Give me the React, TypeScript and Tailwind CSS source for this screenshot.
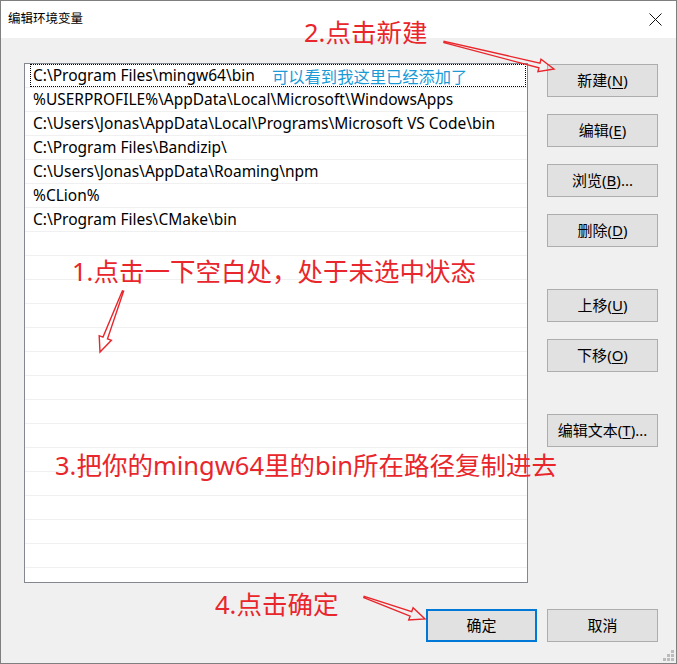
import React from 'react';

const UI_FONT = "font-['Noto_Sans','Noto_Sans_CJK_SC',sans-serif]";

const PATHS = [
  'C:\\Program Files\\mingw64\\bin',
  '%USERPROFILE%\\AppData\\Local\\Microsoft\\WindowsApps',
  'C:\\Users\\Jonas\\AppData\\Local\\Programs\\Microsoft VS Code\\bin',
  'C:\\Program Files\\Bandizip\\',
  'C:\\Users\\Jonas\\AppData\\Roaming\\npm',
  '%CLion%',
  'C:\\Program Files\\CMake\\bin',
];

const ROWS = 22;

function Btn({ label, k, tail = '', primary = false }: { label: string; k?: string; tail?: string; primary?: boolean }) {
  return (
    <button
      className={`w-[111px] h-[33px] bg-[#e1e1e1] flex items-center justify-center text-[15px] text-black ${
        primary ? 'border-2 border-[#0078d7]' : 'border border-[#adadad]'
      }`}
    >
      {label}
      {k && (
        <>
          (<span className="underline underline-offset-2">{k}</span>){tail}
        </>
      )}
    </button>
  );
}

// hollow tapered arrow, like the screenshot annotation tool draws
function Arrow({ x1, y1, x2, y2 }: { x1: number; y1: number; x2: number; y2: number }) {
  const dx = x2 - x1;
  const dy = y2 - y1;
  const len = Math.hypot(dx, dy);
  const ux = dx / len;
  const uy = dy / len;
  const nx = -uy;
  const ny = ux;
  const head = 15;
  const bx = x2 - ux * head;
  const by = y2 - uy * head;
  const pt = (x: number, y: number) => `${x.toFixed(1)},${y.toFixed(1)}`;
  const pts = [
    pt(x1 + nx * 0.6, y1 + ny * 0.6),
    pt(bx + nx * 2.4, by + ny * 2.4),
    pt(bx + nx * 6.5, by + ny * 6.5),
    pt(x2, y2),
    pt(bx - nx * 6.5, by - ny * 6.5),
    pt(bx - nx * 2.4, by - ny * 2.4),
    pt(x1 - nx * 0.6, y1 - ny * 0.6),
  ].join(' ');
  return <polygon points={pts} fill="none" stroke="#e8262b" strokeWidth={1.4} strokeLinejoin="miter" />;
}

export default function App() {
  return (
    <div className={`relative w-[677px] h-[664px] bg-[#f0f0f0] border border-[#7f7f7f] flex flex-col ${UI_FONT}`}>
      {/* Title bar */}
      <div className="h-[37px] bg-white flex items-center justify-between pl-[7px] pr-[14px]">
        <span className="text-[12.5px] text-black">编辑环境变量</span>
        <svg width="13" height="13" viewBox="0 0 13 13">
          <path d="M0.5 0.5 L12.5 12.5 M12.5 0.5 L0.5 12.5" stroke="#111" strokeWidth="1" />
        </svg>
      </div>

      <div className="flex flex-col pl-[23px] pr-[18px]">
        <div className="flex mt-[25px]">
          {/* Path list */}
          <div className="w-[504px] h-[520px] bg-white border border-[#828790] overflow-hidden">
            {Array.from({ length: ROWS }).map((_, i) => (
              <div key={i} className="h-[24px] border-b border-[#f0f0f0] flex items-stretch">
                {i === 0 ? (
                  <div className="flex-1 ml-[5px] mr-[1px] border border-dotted border-black flex items-center pl-[2px] pt-[1px] text-[15.5px] text-black">
                    {PATHS[i]}
                  </div>
                ) : (
                  <div className="flex-1 flex items-center pl-[8px] pt-[1px] text-[15.5px] text-black">{PATHS[i] ?? ''}</div>
                )}
              </div>
            ))}
          </div>

          {/* Side buttons */}
          <div className="ml-[19px] mt-[1px] flex flex-col">
            <Btn label="新建" k="N" />
            <div className="mt-[17px]"><Btn label="编辑" k="E" /></div>
            <div className="mt-[17px]"><Btn label="浏览" k="B" tail="..." /></div>
            <div className="mt-[17px]"><Btn label="删除" k="D" /></div>
            <div className="mt-[42px]"><Btn label="上移" k="U" /></div>
            <div className="mt-[17px]"><Btn label="下移" k="O" /></div>
            <div className="mt-[42px]"><Btn label="编辑文本" k="T" tail="..." /></div>
          </div>
        </div>

        <div className="flex justify-end gap-[10px] mt-[26px]">
          <Btn label="确定" primary />
          <Btn label="取消" />
        </div>
      </div>

      {/* Resize grip */}
      <div className="absolute right-[2px] bottom-[2px] grid grid-cols-3 gap-[1px] w-[11px]">
        <span />
        <span />
        <span className="w-[3px] h-[3px] bg-[#bcbcbc]" />
        <span />
        <span className="w-[3px] h-[3px] bg-[#bcbcbc]" />
        <span className="w-[3px] h-[3px] bg-[#bcbcbc]" />
        <span className="w-[3px] h-[3px] bg-[#bcbcbc]" />
        <span className="w-[3px] h-[3px] bg-[#bcbcbc]" />
        <span className="w-[3px] h-[3px] bg-[#bcbcbc]" />
      </div>

      {/* Annotations */}
      <span className="absolute left-[271px] top-[66px] text-[16.3px] leading-[20px] text-[#1b9ad6]">可以看到我这里已经添加了</span>
      <span className="absolute left-[303px] top-[16px] text-[25.5px] leading-[30px] text-[#e8262b]">2.点击新建</span>
      <span className="absolute left-[71px] top-[255px] text-[25.5px] leading-[30px] text-[#e8262b]">1.点击一下空白处，处于未选中状态</span>
      <span className="absolute left-[54px] top-[449px] text-[25.5px] leading-[30px] text-[#e8262b] whitespace-nowrap">3.把你的mingw64里的bin所在路径复制进去</span>
      <span className="absolute left-[214px] top-[588px] text-[25.5px] leading-[30px] text-[#e8262b]">4.点击确定</span>

      <svg className="absolute left-0 top-0 pointer-events-none" width="677" height="664">
        <Arrow x1={443} y1={41} x2={553} y2={68} />
        <Arrow x1={122} y1={290} x2={99} y2={351} />
        <Arrow x1={363} y1={596} x2={424} y2={618} />
      </svg>
    </div>
  );
}
